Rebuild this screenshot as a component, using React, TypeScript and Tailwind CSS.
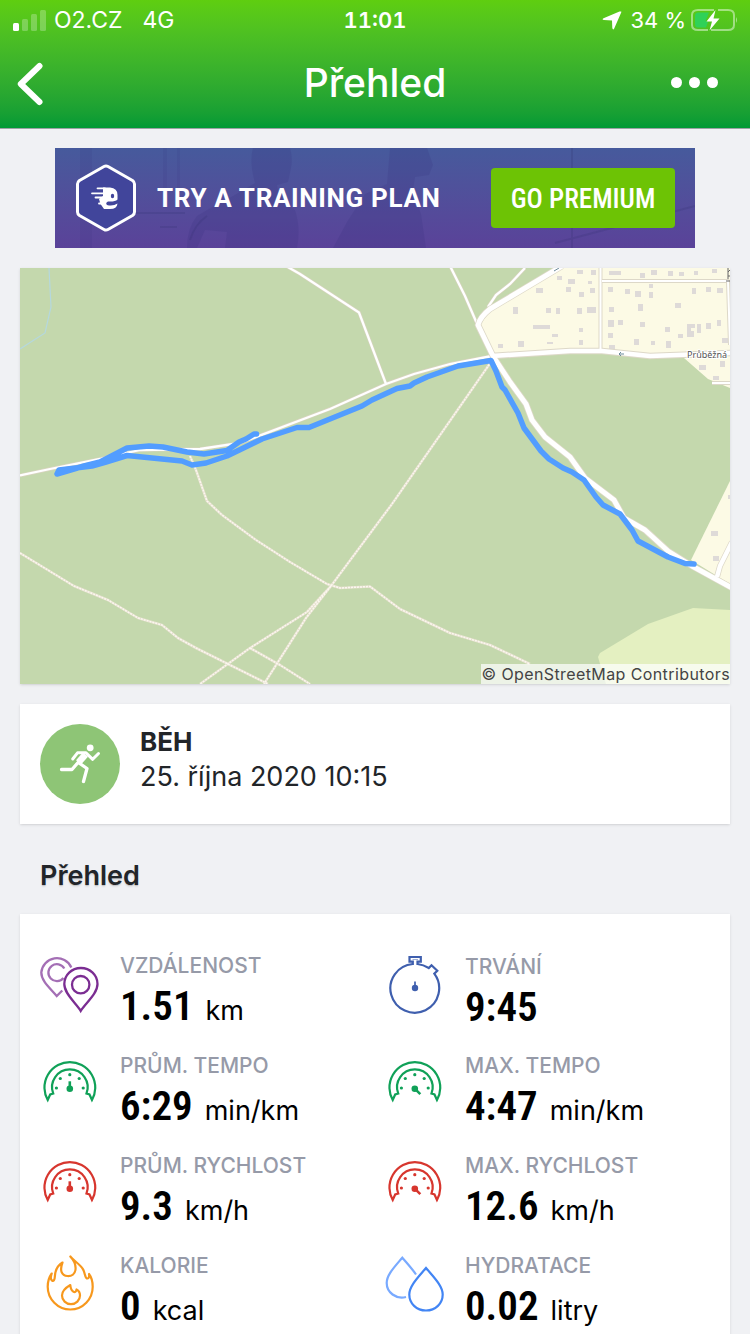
import type { ReactNode } from 'react'

interface Stat {
  label: string
  value: string
  unit?: string
  icon: ReactNode
}

const BUILDINGS: [number, number, number, number][] = [
  [557, 276, 5, 4], [568, 279, 7, 5], [577, 270, 6, 4], [591, 270, 5, 5], [588, 281, 4, 3], [536, 288, 7, 5],
  [566, 287, 5, 5], [590, 288, 5, 5], [579, 292, 5, 5], [513, 307, 5, 7], [546, 308, 5, 5], [556, 308, 4, 6],
  [577, 308, 5, 6], [587, 307, 9, 6], [533, 325, 17, 4], [552, 334, 6, 3], [579, 328, 4, 4], [547, 342, 6, 2],
  [498, 344, 5, 4], [518, 341, 6, 6], [579, 340, 4, 5], [609, 271, 12, 4], [640, 273, 5, 5], [651, 270, 6, 5],
  [668, 271, 5, 5], [679, 272, 5, 4], [694, 271, 4, 4], [712, 269, 5, 4], [608, 287, 5, 5], [625, 289, 5, 5],
  [635, 291, 6, 6], [649, 284, 4, 4], [649, 292, 4, 6], [692, 288, 4, 6], [706, 287, 5, 5], [717, 288, 6, 5],
  [609, 307, 5, 5], [638, 304, 5, 7], [675, 303, 6, 5], [608, 320, 6, 7], [618, 320, 5, 5], [640, 322, 5, 5],
  [665, 327, 5, 5], [687, 324, 8, 4], [687, 328, 4, 9], [691, 331, 3, 6], [697, 324, 4, 9], [706, 323, 5, 6],
  [717, 320, 4, 6], [678, 334, 5, 4], [608, 333, 5, 5], [609, 345, 6, 5], [634, 339, 5, 6], [651, 341, 4, 4],
  [666, 341, 5, 7], [722, 338, 6, 5], [699, 365, 7, 5], [720, 361, 5, 6], [713, 376, 6, 4], [711, 531, 7, 5],
  [713, 556, 6, 5], [728, 495, 3, 4],
]

const FOREST_PATHS =
  'M190 456L196 470L207 501L222 515L256 540L290 562L327 584L340 588L370 586.500L400 609L450 633L490 645L530 664M491 362L392 504L331 586L306 618L264 684M331 586L307 612L250 648L200 684M250 648L280 665L310 684M20 553L74 586L108 600L138 618L162 625L178 638L196 648L226 663L268 684'

const TRACKS =
  'M286 266L300 274L359 312.500L386 384M20 475.500L50 469L100 459L140 450L200 449L240 443L330 409L386 384L414 374L450 364L492 356M450 266L465 296L478 326M525 268L510 284L496 295L488 307'

const MAIN_ROAD =
  'M562 266L490 309Q480 317 478 325L493 356L510 382L526 404L532 420L545 437L570 457L585 478L614 500L624 518L645 530L668 551L692 566L732 588'

const ROUTE =
  'M256.500 434H254L246 439L239 442L227 450.500L204 454L187 452L163 447L149 446L127 448L100 462L84 466L57 474L59 470L92 466L106 462L127 455.500L182 461L192 465L206 463L227 456L262 439L297 427.500H309L362 406L372 400L397 388.500L410 386L414 383L427 377L458 366L491 360.500L496 371L502 387L505 390L518 413L524 428L541 451L549 459L563 468L572 472L584 480L596 497L603 505L620 514L632 530L638 541L668 557L685 563.500L694 564'

function RouteMap() {
  return (
    <svg viewBox="20 268 710 416" className="block h-auto w-full" role="img" aria-label="Mapa trasy">
      <rect x="20" y="268" width="710" height="416" fill="#c4d8ad" />
      <path d="M598 657L600 653L648 624L693 608L730 610V684H606Z" fill="#e4f0c1" />
      <path d="M557 268L490 310L479 327L492 356L570 351L640 355L684 358L708 379L730 388V268Z" fill="#fcfae5" />
      <path d="M730 481L691 560L730 584Z" fill="#fcfae5" />
      <g fill="#dedad8">
        {BUILDINGS.map(([x, y, w, h]) => (
          <rect key={`${x}-${y}`} x={x} y={y} width={w} height={h} />
        ))}
      </g>
      <path d="M49 268L51 307L45 333L20 349" fill="none" stroke="#b5d8de" strokeWidth="1.200" />

      {/* forest paths */}
      <path d={FOREST_PATHS} fill="none" stroke="#e6e0cf" strokeWidth="2.600" strokeLinejoin="round" />
      <path d={FOREST_PATHS} fill="none" stroke="#fbf8ef" strokeWidth="1.500" strokeDasharray="2 1" strokeLinejoin="round" />
      <path d={TRACKS} fill="none" stroke="#d9d3c0" strokeWidth="3.500" />
      <path d={TRACKS} fill="none" stroke="#fff" strokeWidth="2.300" />

      {/* streets */}
      <g fill="none" stroke="#ddd8c8" strokeLinejoin="round">
        <path d="M600.500 268V350M602 281H728L730 345M730 383H712" strokeWidth="4" />
        <path d={MAIN_ROAD} strokeWidth="6.500" />
        <path d="M492 356L570 351L602 351L650 356L732 353" strokeWidth="6.500" />
        <path d="M717 577L720 566L732 542" strokeWidth="6" />
      </g>
      <g fill="none" stroke="#fff" strokeLinejoin="round">
        <path d="M600.500 268V350M602 281H728L730 345M730 383H712" strokeWidth="2" />
        <path d={MAIN_ROAD} strokeWidth="5" />
        <path d="M492 356L570 351L602 351L650 356L732 353" strokeWidth="4.500" />
        <path d="M717 577L720 566L732 542" strokeWidth="4.500" />
      </g>
      <path d="M624 354H619M621 352L619 354L621 356M559 268L554 271" fill="none" stroke="#6b8a9a" strokeWidth="1" />
      <path d="M728 268V279M726 281H730M728 272L730 270M728 276H730" fill="none" stroke="#666" strokeWidth="1" />
      <text x="687" y="358" fontSize="9" fill="#555" stroke="#fff" strokeWidth="2" paintOrder="stroke" className="font-['Noto_Sans',sans-serif]">
        Průběžná
      </text>
      <path d={ROUTE} fill="none" stroke="#529dff" strokeWidth="5.500" strokeLinecap="round" strokeLinejoin="round" />
    </svg>
  )
}

function PinsIcon() {
  return (
    <svg viewBox="0 0 60 60" className="size-[60px]" fill="none" strokeWidth="2.300" aria-hidden="true">
      <g stroke="#a46fb5">
        <path d="M31.300 12.500A15.700 15.700 0 0 0 1.300 17.500C1.300 26 10 33 16.700 41L22.300 35.500" />
        <path d="M24.300 13.500A8.500 8.500 0 1 0 23.500 23" />
      </g>
      <g stroke="#7b2d92">
        <path d="M40.700 56C36 48 24.300 39 24.300 29A16.400 15.800 0 0 1 57.500 29C57.500 39 45.500 48 40.700 56Z" />
        <circle cx="40.700" cy="29.700" r="8.700" />
      </g>
    </svg>
  )
}

function StopwatchIcon() {
  return (
    <svg viewBox="0 0 60 60" className="size-[60px]" fill="none" stroke="#3f5fae" strokeWidth="2.200" aria-hidden="true">
      <path d="M27.800 9V6.700H24.500V2H35.800V6.700H32.500V9Q38.500 9.700 43.800 13L46.500 10.200L52.300 15.800L49.300 18.700A24.400 24.400 0 1 1 27.800 9Z" />
      <path d="M27.500 4.500H33" strokeWidth="1" opacity="0.500" />
      <circle cx="30" cy="33" r="3.200" fill="#3f5fae" stroke="none" />
      <path d="M30 33V26.500" strokeWidth="1.700" />
    </svg>
  )
}

function GaugeIcon({ color, max = false }: { color: string; max?: boolean }) {
  return (
    <svg viewBox="0 0 60 60" className="size-[60px]" fill="none" stroke={color} strokeWidth="2.200" aria-hidden="true">
      <path d="M7.700 45A25.400 25.400 0 1 1 52 45L49.500 39.500L46.500 38.500A17.800 17.800 0 1 0 13.200 38.500L10.200 39.500Z" />
      <g fill={color} stroke="none">
        <circle cx="29.800" cy="19.700" r="1.600" />
        <circle cx="20.300" cy="23.500" r="1.600" />
        <circle cx="39.200" cy="23.500" r="1.600" />
        <circle cx="16.400" cy="33" r="1.600" />
        <circle cx="43.200" cy="33" r="1.600" />
        <circle cx="29.800" cy="33.700" r="3.300" />
      </g>
      <path d={max ? 'M29.800 33.700L35.300 39.200' : 'M29.800 33.700V26.300'} strokeWidth="2.600" />
    </svg>
  )
}

function FlameIcon() {
  return (
    <svg viewBox="0 0 60 60" className="size-[60px]" fill="none" stroke="#f7981d" strokeWidth="2.200" strokeLinejoin="round" aria-hidden="true">
      <path d="M30.300 1.500C34.500 6 36 10 35.500 14.500C35 19 31.500 21.300 27.500 21C21.500 20.500 19.500 15.500 22.500 7.500C17.500 10.500 15 16 14.800 22C14.700 25 13.500 26.500 12 25.500C10.500 24.500 10.700 21.500 11.700 18.500C8.500 23 7.700 27.500 7.700 31.700C7.700 44 17.700 54.500 30.300 54.500C43 54.500 52.700 44 52.700 31.700C52.700 27 51.700 22.500 49 19C49.500 21 49 23.500 47.500 23.500C44.500 23.500 45.500 17.500 42.500 13.500C39.500 9 34 6 30.300 1.500Z" />
      <path d="M30.300 30C26 32.500 22 36 22 40.500A9 8.700 0 0 0 40 40.500C40 37.500 38.500 35.500 36.500 34.500C36.500 36.500 35 37.500 33.500 36.800C31 35.500 30.500 32.500 30.300 30Z" />
    </svg>
  )
}

function DropsIcon() {
  return (
    <svg viewBox="0 0 60 60" className="size-[60px]" fill="none" strokeWidth="2.200" aria-hidden="true">
      <path d="M31 19.500C27 13.500 22 8 17.300 2.700C9 12.500 1.700 20 1.700 28C1.700 37.500 11 44.500 21 42" stroke="#79aaff" />
      <path d="M41 13C33 22.500 24.300 31 24.300 39.500C24.300 48.500 31.500 55.500 41 55.500C50.500 55.500 57.700 48.500 57.700 39.500C57.700 31 49 22.500 41 13Z" stroke="#4285f4" />
    </svg>
  )
}

const GREEN = '#10a158'
const RED = '#d7362e'

const STATS: Stat[] = [
  { label: 'VZDÁLENOST', value: '1.51', unit: 'km', icon: <PinsIcon /> },
  { label: 'TRVÁNÍ', value: '9:45', icon: <StopwatchIcon /> },
  { label: 'PRŮM. TEMPO', value: '6:29', unit: 'min/km', icon: <GaugeIcon color={GREEN} /> },
  { label: 'MAX. TEMPO', value: '4:47', unit: 'min/km', icon: <GaugeIcon color={GREEN} max /> },
  { label: 'PRŮM. RYCHLOST', value: '9.3', unit: 'km/h', icon: <GaugeIcon color={RED} /> },
  { label: 'MAX. RYCHLOST', value: '12.6', unit: 'km/h', icon: <GaugeIcon color={RED} max /> },
  { label: 'KALORIE', value: '0', unit: 'kcal', icon: <FlameIcon /> },
  { label: 'HYDRATACE', value: '0.02', unit: 'litry', icon: <DropsIcon /> },
]

function StatusBar() {
  return (
    <div className="grid h-10 grid-cols-3 items-center px-3 text-[23px] leading-none">
      <div className="flex items-center gap-2">
        <svg viewBox="0 0 34 22" className="h-[22px] w-[34px]" fill="#fff" aria-hidden="true">
          <rect x="1" y="14" width="6" height="8" rx="1.500" />
          <g opacity="0.250">
            <rect x="10" y="10" width="6" height="12" rx="1.500" />
            <rect x="19" y="5" width="6" height="17" rx="1.500" />
            <rect x="28" y="1" width="6" height="21" rx="1.500" />
          </g>
        </svg>
        <span>O2.CZ</span>
        <span className="ml-3">4G</span>
      </div>
      <time className="text-center text-[22px] font-semibold tabular-nums">11:01</time>
      <div className="flex items-center justify-end gap-1">
        <svg viewBox="0 0 20 20" className="mr-1 size-5" fill="#fff" aria-hidden="true">
          <path d="M18.500 1.500Q19.800 1 19.200 2.500L12.200 18.500Q11 20.500 10.300 18L10 10.500L2 10Q-0.500 9.500 1.500 8.300L17.500 1.500Z" />
        </svg>
        <span className="text-[22px]">34 %</span>
        <svg viewBox="0 0 48 24" className="h-6 w-12" aria-hidden="true">
          <path d="M24 2H8Q2 2 2 7V17Q2 22 8 22H18M28 2H38Q44 2 44 7V17Q44 22 38 22H21" fill="none" stroke="#fff" strokeOpacity="0.450" strokeWidth="2" />
          <path d="M46 9Q48 12 46 15Z" fill="#fff" opacity="0.500" />
          <path d="M8 4.500H19L15.500 13L18 14L16 19.500H8Q5 19.500 5 16V8Q5 4.500 8 4.500Z" fill="#30d158" />
          <path d="M25.500 2L16.500 13.500H22L19.500 22.500L29.500 10.500H23.500Z" fill="#fff" />
        </svg>
      </div>
    </div>
  )
}

function Banner() {
  return (
    <a href="#premium" className="relative mx-[35px] flex h-[100px] items-center overflow-hidden bg-linear-to-b from-[#465a9c] to-[#5a4299] px-5 text-white">
      <svg viewBox="0 0 640 100" preserveAspectRatio="none" className="absolute inset-0 size-full" aria-hidden="true">
        <g fill="#352f7c" opacity="0.180">
          <path d="M198 0H235Q238 10 236 20L233 34L222 37L224 48L240 62Q246 80 242 100H170L172 84L150 82L142 100H132Q132 80 142 68L152 62L178 48L200 35Q194 14 198 0Z" />
          <path d="M335 0H372L378 17L374 27L360 29L358 42L366 66L371 100H278L292 74L310 46L332 36Z" />
          <path d="M25 0H37V100H25ZM108 0H112V60H108ZM122 0H125V62H122Z" opacity="0.600" />
        </g>
        <path d="M135 92Q140 76 152 68M80 65H130M105 79H122M500 95L640 58M517 0V100" fill="none" stroke="#2c2b6c" strokeWidth="2" opacity="0.180" />
      </svg>
      <svg viewBox="0 0 62 68" className="relative h-[68px] w-[62px] shrink-0" aria-hidden="true">
        <path d="M29 2.500Q31 1.300 33 2.500L57.500 16.500Q59.500 18 59.500 20V48Q59.500 50 57.500 51.500L33 65.500Q31 66.700 29 65.500L4.500 51.500Q2.500 50 2.500 48V20Q2.500 18 4.500 16.500Z" fill="#41459b" stroke="#fff" strokeWidth="3" strokeLinejoin="round" />
        <path d="M28 23.500H35Q42.500 24 42.500 31V35.500Q40 38 33 37.500Q30 39 32 41Q38 42.500 42.500 39.500Q42 45 35 45H29L25.500 40L24 35L28 32Z" fill="#fff" />
        <path d="M22.500 24.300H30M17 29.300H30M20.500 33.500H28M24 39.500H28" fill="none" stroke="#fff" strokeWidth="1.800" strokeLinecap="round" />
        <ellipse cx="37.500" cy="32" rx="1.700" ry="2.200" fill="#41459b" />
      </svg>
      <span className="relative ml-5 font-['Roboto',sans-serif] text-[26px] font-bold tracking-wide whitespace-nowrap">TRY A TRAINING PLAN</span>
      <span className="relative ml-auto flex h-[60px] w-[184px] items-center justify-center rounded bg-[#6dc305] pt-[2px] font-['Roboto_Condensed',Roboto,sans-serif] text-[27px] font-medium whitespace-nowrap">
        GO PREMIUM
      </span>
    </a>
  )
}

function RunnerIcon() {
  return (
    <svg viewBox="0 0 80 80" className="size-20 shrink-0" aria-hidden="true">
      <circle cx="40" cy="40" r="40" fill="#8ec576" />
      <circle cx="50.200" cy="23.800" r="3.400" fill="#fff" />
      <path d="M32.700 35L37.500 28.800H46L52.700 35.300L58.500 29.500" fill="none" stroke="#fff" strokeWidth="3" strokeLinecap="round" strokeLinejoin="round" />
      <path d="M45.500 30.500L38.500 38.500" stroke="#fff" strokeWidth="6.500" />
      <path d="M38.500 38L32 45.500H21.500" fill="none" stroke="#fff" strokeWidth="3.300" strokeLinecap="round" strokeLinejoin="round" />
      <path d="M39 39L47 44.500L43.500 57.500" fill="none" stroke="#fff" strokeWidth="3.300" strokeLinecap="round" strokeLinejoin="round" />
    </svg>
  )
}

function StatItem({ label, value, unit, icon }: Stat) {
  return (
    <div className="flex h-[100px] items-center gap-5">
      <div className="shrink-0">{icon}</div>
      <div className="min-w-0 pt-[11px]">
        <dt className="text-[21px] leading-8 font-medium whitespace-nowrap text-[#969aa8]">{label}</dt>
        <dd className="flex items-baseline gap-3 whitespace-nowrap text-black">
          <span className="font-['Roboto_Condensed',Roboto,sans-serif] text-[41px] leading-12 font-semibold">{value}</span>
          {unit && <span className="text-[27px]">{unit}</span>}
        </dd>
      </div>
    </div>
  )
}

export default function App() {
  return (
    <div className="min-h-screen bg-[#f0f1f4] font-['Inter',sans-serif] text-[#222529]">
      <header className="border-b border-[#9ba3a5] bg-linear-to-b from-[#5fce10] to-[#009a35] text-white">
        <StatusBar />
        <div className="grid h-[88px] grid-cols-[1fr_auto_1fr] items-center px-4 pb-1">
          <button type="button" aria-label="Zpět" className="justify-self-start">
            <svg viewBox="0 0 30 48" className="h-12 w-[30px]" fill="none" stroke="#fff" strokeWidth="6" strokeLinecap="round" strokeLinejoin="round">
              <path d="M23.500 8L4.800 26L23.500 44" />
            </svg>
          </button>
          <h1 className="text-[39px] leading-none font-medium">Přehled</h1>
          <button type="button" aria-label="Další možnosti" className="mr-4 flex gap-[7px] justify-self-end">
            <span className="size-[11px] rounded-full bg-white" />
            <span className="size-[11px] rounded-full bg-white" />
            <span className="size-[11px] rounded-full bg-white" />
          </button>
        </div>
      </header>

      <main className="flex flex-col gap-5 px-5 pt-[19px]">
        <Banner />

        <section className="relative shadow-sm">
          <RouteMap />
          <a href="#osm" className="absolute right-0 bottom-0 bg-white/70 text-[16px] leading-5 tracking-wide text-[#444]">
            © OpenStreetMap Contributors
          </a>
        </section>

        <section className="flex h-[120px] items-center gap-5 bg-white px-5 shadow-sm">
          <RunnerIcon />
          <div className="pb-[10px] leading-[35px]">
            <h2 className="text-[26px] leading-[35px] font-bold">BĚH</h2>
            <p className="text-[27px] leading-[35px]">25. října 2020 10:15</p>
          </div>
        </section>

        <section>
          <h2 className="px-5 pt-3 text-[27px] leading-10 font-semibold text-shadow-sm">Přehled</h2>
          <dl className="mt-[18px] grid grid-cols-2 bg-white pt-[21px] pl-5 shadow-sm">
            {STATS.map((stat) => (
              <StatItem key={stat.label} {...stat} />
            ))}
          </dl>
        </section>
      </main>
    </div>
  )
}
